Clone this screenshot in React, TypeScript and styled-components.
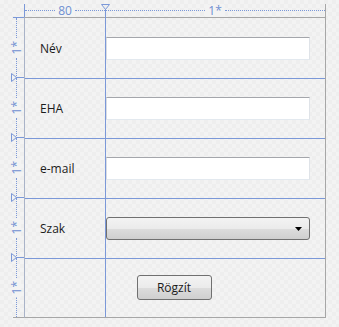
import React from 'react';
import styled, { createGlobalStyle } from 'styled-components';

// TOKENS
const blue = '#7b98d8';
const rulerBlue = '#6f8fd1';
const frame = '#a6a6a6';
const paper = '#f3f3f3';
const font = '"Open Sans", "Noto Sans", "Liberation Sans", sans-serif';
const rowTracks = 'repeat(4, 60px) 59px';

const GlobalStyle = createGlobalStyle`
    html, body {
        margin: 0;
        padding: 0;
        width: 339px;
        height: 327px;
        overflow: hidden;
        background-color: ${paper};
        background-image: conic-gradient(#eeeeee 25%, transparent 0 50%, #eeeeee 0 75%, transparent 0);
        background-size: 8px 8px;
        font-family: ${font};
    }
`;

// PAGE LAYOUT
const Designer = styled.div`
    display: grid;
    grid-template-columns: 24px 302px;
    grid-template-rows: 17px 301px;
`;

// TOP RULER
const TopRuler = styled.div`
    grid-column: 2;
    grid-row: 1;
    display: grid;
    grid-template-columns: 81px 1fr;
    padding-top: 4px;
`;

const TopSegment = styled.div<{ $first?: boolean }>`
    position: relative;
    display: flex;
    align-items: center;
    height: 13px;
    border-left: ${({ $first }) => ($first ? `1px solid ${blue}` : 'none')};
    border-right: ${({ $first }) => ($first ? 'none' : `1px solid ${frame}`)};
`;

const HDots = styled.span`
    flex: 1;
    height: 0;
    margin-top: -1px;
    border-top: 1px dotted ${blue};
`;

const RulerText = styled.span`
    padding: 0 3px;
    font-size: 12px;
    line-height: 12px;
    color: ${rulerBlue};
    background: ${paper};
`;

const TopMarker = styled.svg`
    position: absolute;
    left: -4px;
    top: 0;
`;

// LEFT RULER
const LeftRuler = styled.div`
    grid-column: 1;
    grid-row: 2;
    display: grid;
    grid-template-rows: ${rowTracks};
    border-top: 1px solid ${blue};
    border-bottom: 1px solid ${frame};
    margin-left: 13px;
`;

const LeftSegment = styled.div`
    position: relative;
    display: flex;
    flex-direction: column;
    align-items: center;
    width: 9px;
    margin-left: -1px;
`;

const VDots = styled.span`
    flex: 1;
    width: 0;
    border-left: 1px dotted ${blue};
`;

const VerticalText = styled(RulerText)`
    padding: 3px 0;
    writing-mode: vertical-rl;
    transform: rotate(180deg);
    line-height: 9px;
`;

const SideMarker = styled.div`
    position: absolute;
    top: -5px;
    left: -1px;
    display: flex;
    align-items: center;
`;

const MarkerLine = styled.span`
    width: 7px;
    height: 1px;
    background: ${blue};
`;

// CANVAS
const Canvas = styled.div`
    grid-column: 2;
    grid-row: 2;
    display: grid;
    grid-template-columns: 80px 1fr;
    grid-template-rows: ${rowTracks};
    border: 1px solid ${frame};
    border-left-color: #a9b3c8;
`;

const LineCell = styled.div<{ $row: number; $col: number }>`
    grid-row: ${({ $row }) => $row};
    grid-column: ${({ $col }) => $col};
    border-top: ${({ $row }) => ($row > 1 ? `1px solid ${blue}` : 'none')};
    border-left: ${({ $col }) => ($col > 1 ? `1px solid ${blue}` : 'none')};
`;

const Label = styled.div<{ $row: number }>`
    grid-row: ${({ $row }) => $row};
    grid-column: 1;
    display: flex;
    align-items: center;
    padding-left: 15px;
    padding-top: 1px;
    font-size: 12px;
    color: #1b1b1b;
`;

const Field = styled.div<{ $row: number }>`
    grid-row: ${({ $row }) => $row};
    grid-column: 2;
    display: flex;
    align-items: center;
    padding: 1px 15px 0 1px;
`;

const TextBox = styled.input`
    box-sizing: border-box;
    width: 100%;
    height: 23px;
    margin: 0;
    padding: 0 4px;
    background: #ffffff;
    border: 1px solid;
    border-color: #a4a6ab #dfe3e8 #e3e9ef #d9dce3;
    outline: none;
    font-family: ${font};
    font-size: 12px;
`;

const ComboBox = styled.div`
    box-sizing: border-box;
    display: flex;
    align-items: center;
    justify-content: flex-end;
    width: 100%;
    height: 23px;
    padding-right: 7px;
    border: 1px solid #707070;
    border-radius: 3px;
    background: linear-gradient(#f3f3f3 0%, #ebebeb 50%, #dddddd 51%, #cfcfcf 100%);
`;

const Actions = styled.div`
    grid-row: 5;
    grid-column: 1 / 3;
    display: flex;
    align-items: center;
    justify-content: center;
    padding: 0 2px 0 0;
`;

const Button = styled.button`
    box-sizing: border-box;
    width: 75px;
    height: 25px;
    padding: 0;
    border: 1px solid #707070;
    border-radius: 3px;
    background: linear-gradient(#f3f3f3 0%, #ebebeb 50%, #dddddd 51%, #cfcfcf 100%);
    font-family: ${font};
    font-size: 12px;
    color: #1b1b1b;
`;

// DATA
const rows = [
    { label: 'Név', kind: 'text' },
    { label: 'EHA', kind: 'text' },
    { label: 'e-mail', kind: 'text' },
    { label: 'Szak', kind: 'combo' },
];

const Triangle = ({ dir }: { dir: 'down' | 'right' }) =>
    dir === 'down' ? (
        <TopMarker width="9" height="14" viewBox="0 0 9 14">
            <path d="M0.5 0.5 H8.5 L4.5 5.5 Z" fill="none" stroke={blue} />
            <line x1="4.5" y1="5" x2="4.5" y2="14" stroke={blue} />
        </TopMarker>
    ) : (
        <svg width="6" height="9" viewBox="0 0 6 9">
            <path d="M0.5 0.5 L5.5 4.5 L0.5 8.5 Z" fill="none" stroke={blue} />
        </svg>
    );

export default function App(): JSX.Element {
    return (
        <>
            <GlobalStyle />
            <Designer>
                <TopRuler>
                    <TopSegment $first>
                        <HDots />
                        <RulerText>80</RulerText>
                        <HDots />
                    </TopSegment>
                    <TopSegment>
                        <Triangle dir="down" />
                        <HDots />
                        <RulerText>1*</RulerText>
                        <HDots />
                    </TopSegment>
                </TopRuler>

                <LeftRuler>
                    {[1, 2, 3, 4, 5].map((r) => (
                        <LeftSegment key={r}>
                            {r > 1 && (
                                <SideMarker>
                                    <Triangle dir="right" />
                                    <MarkerLine />
                                </SideMarker>
                            )}
                            <VDots />
                            <VerticalText>1*</VerticalText>
                            <VDots />
                        </LeftSegment>
                    ))}
                </LeftRuler>

                <Canvas>
                    {[1, 2, 3, 4, 5].map((r) =>
                        [1, 2].map((c) => <LineCell key={`${r}-${c}`} $row={r} $col={c} />)
                    )}
                    {rows.map((row, i) => (
                        <React.Fragment key={row.label}>
                            <Label $row={i + 1}>{row.label}</Label>
                            <Field $row={i + 1}>
                                {row.kind === 'text' ? (
                                    <TextBox type="text" aria-label={row.label} />
                                ) : (
                                    <ComboBox role="combobox" aria-label={row.label}>
                                        <svg width="7" height="4" viewBox="0 0 7 4">
                                            <path d="M0 0 H7 L3.5 4 Z" fill="#000" />
                                        </svg>
                                    </ComboBox>
                                )}
                            </Field>
                        </React.Fragment>
                    ))}
                    <Actions>
                        <Button type="button">Rögzít</Button>
                    </Actions>
                </Canvas>
            </Designer>
        </>
    );
}
